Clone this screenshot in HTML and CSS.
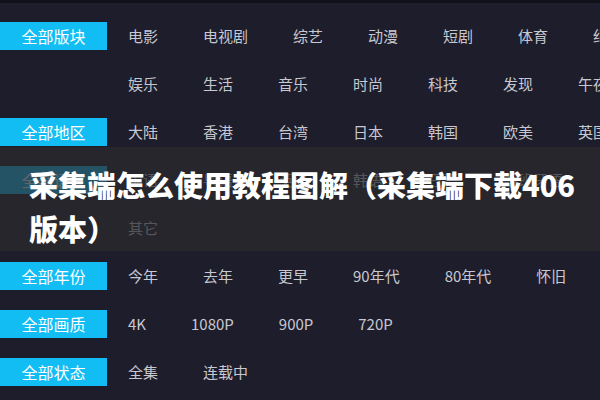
FILE: index.html
```html
<!DOCTYPE html>
<html lang="zh-CN">
<head>
<meta charset="utf-8">
<title>采集端怎么使用教程图解</title>
<link rel="stylesheet" href="styles.css">
</head>
<body>
<div class="page">
  <div class="topbar"></div>
  <div class="filters">
    <div class="row">
      <div class="label">全部版块</div>
      <div class="items">
        <span>电影</span><span>电视剧</span><span>综艺</span><span>动漫</span><span>短剧</span><span>体育</span><span>纪录</span>
        <span>娱乐</span><span>生活</span><span>音乐</span><span>时尚</span><span>科技</span><span>发现</span><span>午夜</span>
      </div>
    </div>
    <div class="row">
      <div class="label">全部地区</div>
      <div class="items">
        <span>大陆</span><span>香港</span><span>台湾</span><span>日本</span><span>韩国</span><span>欧美</span><span>英国</span>
      </div>
    </div>
    <div class="row">
      <div class="label">全部语言</div>
      <div class="items">
        <span>国语</span><span>粤语</span><span>英语</span><span>韩语</span><span>日语</span><span>西班牙语</span><span>法语</span>
        <span>其它</span>
      </div>
    </div>
    <div class="row">
      <div class="label">全部年份</div>
      <div class="items">
        <span>今年</span><span>去年</span><span>更早</span><span>90年代</span><span>80年代</span><span>怀旧</span>
      </div>
    </div>
    <div class="row">
      <div class="label">全部画质</div>
      <div class="items">
        <span>4K</span><span>1080P</span><span>900P</span><span>720P</span>
      </div>
    </div>
    <div class="row">
      <div class="label">全部状态</div>
      <div class="items">
        <span>全集</span><span>连载中</span>
      </div>
    </div>
  </div>
  <div class="banner">
    <h1 class="title">采集端怎么使用教程图解（采集端下载406版本）</h1>
  </div>
</div>
</body>
</html>
```
FILE: styles.css
```css
html, body {
  margin: 0;
  padding: 0;
}
body {
  width: 600px;
  height: 400px;
  overflow: hidden;
  background: #1d1d2c;
  font-family: "Noto Sans CJK SC", "Microsoft YaHei", sans-serif;
}
.page {
  position: relative;
  width: 600px;
  height: 400px;
  overflow: hidden;
}
.topbar {
  height: 3px;
  background: #11111a;
}
.filters {
  padding-top: 19px;
  display: flex;
  flex-direction: column;
  gap: 20px;
}
.row {
  display: flex;
  align-items: flex-start;
  gap: 21px;
}
.label {
  flex: none;
  width: 107px;
  height: 28px;
  line-height: 28px;
  background: #12bdf3;
  color: #ffffff;
  font-size: 16px;
  text-align: center;
}
.items {
  flex: none;
  width: 522px;
  display: flex;
  flex-wrap: wrap;
  column-gap: 45px;
  row-gap: 20px;
}
.items span {
  height: 28px;
  line-height: 28px;
  font-size: 15px;
  color: #c8c8d0;
  white-space: nowrap;
}
.banner {
  position: absolute;
  left: 0;
  right: 0;
  top: 147px;
  height: 104px;
  box-sizing: border-box;
  padding: 15px 20px 0 29px;
  background: rgba(42, 42, 44, 0.72);
}
.title {
  margin: 0;
  font-size: 29px;
  line-height: 44px;
  font-weight: 900;
  color: #ffffff;
}
```
